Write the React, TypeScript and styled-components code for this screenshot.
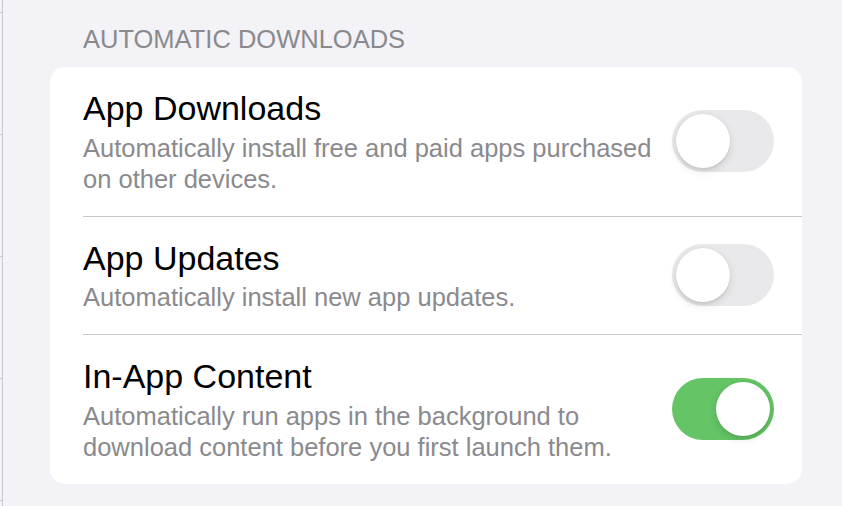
import React from "react";
import styled, { createGlobalStyle } from "styled-components";

const GlobalStyle = createGlobalStyle`
  html, body {
    margin: 0;
    padding: 0;
    background: #f2f2f7;
    font-family: "Liberation Sans", Arial, sans-serif;
    -webkit-font-smoothing: antialiased;
  }
  #root { min-height: 100vh; }
`;

const Page = styled.div`
  display: flex;
  height: 506px;
  overflow: hidden;
  background: #f2f2f7;
`;

const Sidebar = styled.div`
  width: 2px;
  border-right: 1px solid #c9c8ce;
  padding-top: 12px;
  display: flex;
  flex-direction: column;
  flex-shrink: 0;
`;

const SidebarCell = styled.div`
  height: 121px;
  border-top: 1px solid #c9c8ce;
  flex-shrink: 0;
`;

const Main = styled.main`
  flex: 1;
  padding: 24px 40px 0 47px;
`;

const SectionHeader = styled.h2`
  margin: 0 0 12px 33px;
  font-size: 25.5px;
  line-height: 31px;
  font-weight: 400;
  color: #8a8a8e;
  letter-spacing: 0;
`;

const Card = styled.section`
  background: #ffffff;
  border-radius: 15px;
  overflow: hidden;
`;

const Row = styled.div`
  padding-left: 33px;
`;

const RowInner = styled.div<{ $divider: boolean }>`
  display: flex;
  align-items: center;
  padding: 21px 28px 21px 0;
  border-bottom: ${(p) => (p.$divider ? "1px solid #c8c7cc" : "none")};
`;

const Texts = styled.div`
  flex: 1;
  display: flex;
  flex-direction: column;
  padding-right: 20px;
`;

const Title = styled.div`
  font-size: 34px;
  line-height: 40px;
  color: #000000;
`;

const Subtitle = styled.div`
  margin-top: 4.5px;
  font-size: 25.5px;
  line-height: 31px;
  color: #8a8a8e;
  max-width: 580px;
`;

const Track = styled.button<{ $on: boolean }>`
  position: relative;
  width: 102px;
  height: 62px;
  border-radius: 31px;
  border: none;
  padding: 0;
  flex-shrink: 0;
  background: ${(p) => (p.$on ? "#64c466" : "#e9e9eb")};
  cursor: pointer;
`;

const Knob = styled.span<{ $on: boolean }>`
  position: absolute;
  top: 4px;
  left: ${(p) => (p.$on ? "44px" : "4px")};
  width: 54px;
  height: 54px;
  border-radius: 50%;
  background: #ffffff;
  box-shadow: 0 3px 8px rgba(0, 0, 0, 0.12), 0 3px 1px rgba(0, 0, 0, 0.04),
    0 0 0 0.5px rgba(0, 0, 0, 0.04);
`;

type Item = { title: string; subtitle: React.ReactNode; on: boolean };

const items: Item[] = [
  {
    title: "App Downloads",
    subtitle: (
      <>
        Automatically install free and paid apps purchased
        <br />
        on other devices.
      </>
    ),
    on: false,
  },
  {
    title: "App Updates",
    subtitle: "Automatically install new app updates.",
    on: false,
  },
  {
    title: "In-App Content",
    subtitle: (
      <>
        Automatically run apps in the background to
        <br />
        download content before you first launch them.
      </>
    ),
    on: true,
  },
];

function Toggle({ on }: { on: boolean }) {
  return (
    <Track $on={on} role="switch" aria-checked={on}>
      <Knob $on={on} />
    </Track>
  );
}

export default function App() {
  return (
    <>
      <GlobalStyle />
      <Page>
        <Sidebar>
          {[0, 1, 2, 3, 4].map((i) => (
            <SidebarCell key={i} />
          ))}
        </Sidebar>
        <Main>
          <SectionHeader>AUTOMATIC DOWNLOADS</SectionHeader>
          <Card>
            {items.map((it, i) => (
              <Row key={it.title}>
                <RowInner $divider={i < items.length - 1}>
                  <Texts>
                    <Title>{it.title}</Title>
                    <Subtitle>{it.subtitle}</Subtitle>
                  </Texts>
                  <Toggle on={it.on} />
                </RowInner>
              </Row>
            ))}
          </Card>
        </Main>
      </Page>
    </>
  );
}
